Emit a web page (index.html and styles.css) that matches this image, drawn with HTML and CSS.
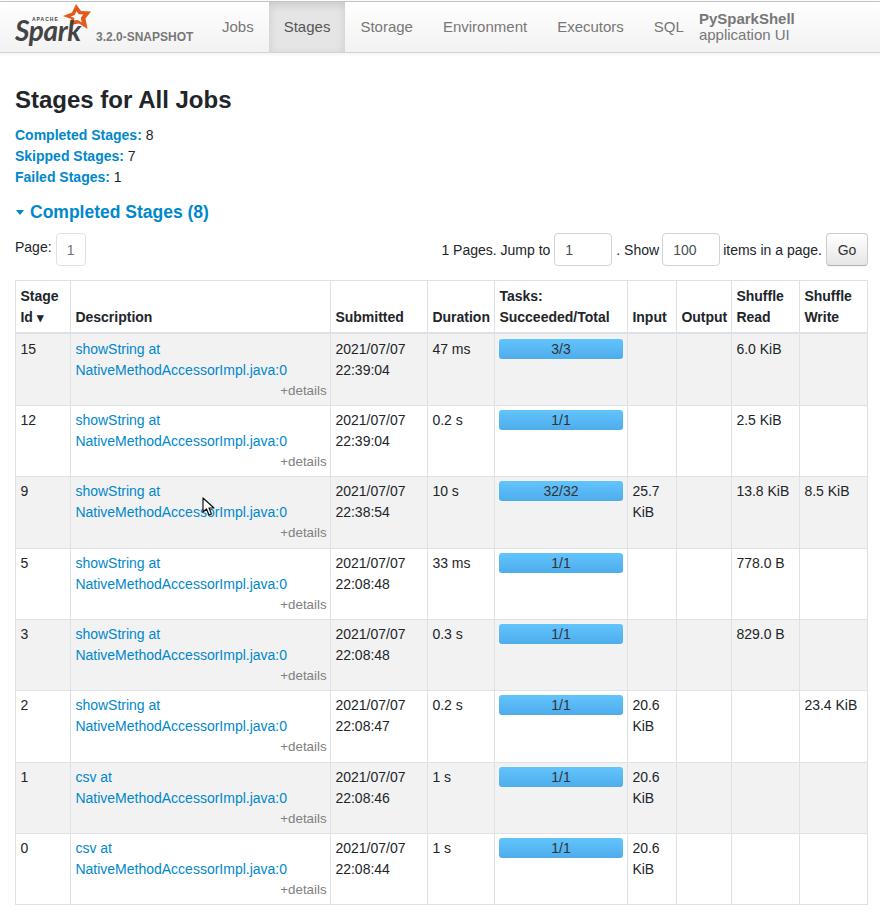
FILE: index.html
```html
<!DOCTYPE html>
<html lang="en">
<head>
<meta charset="utf-8">
<title>PySparkShell - Stages for All Jobs</title>
<link rel="stylesheet" href="styles.css">
</head>
<body>
<nav class="navbar">
  <a class="brand" href="#">
    <span class="logo">
      <svg class="star" viewBox="0 0 30 28" width="30" height="28"><path d="M14 1 L19 8 L29 8.5 L23.5 15.5 L25.5 26 L17 20.5 L8 22 L9.5 16 L1 13 L10 9.5 Z M14.55 8.15 L12.75 12 L8.7 13.5 L12.5 15 L11.9 17.6 L15.9 17 L19.7 19.4 L18.8 14.7 L21.3 11.5 L16.8 11.3 Z" fill="#e25a1c" fill-rule="evenodd"/></svg>
      <span class="spark">Spark</span>
      <span class="apache">APACHE</span>
    </span>
    <span class="version">3.2.0-SNAPSHOT</span>
  </a>
  <ul class="tabs">
    <li class="tab">Jobs</li>
    <li class="tab active">Stages</li>
    <li class="tab">Storage</li>
    <li class="tab">Environment</li>
    <li class="tab">Executors</li>
    <li class="tab">SQL</li>
  </ul>
  <p class="appname"><strong>PySparkShell</strong><br>application UI</p>
</nav>
<main class="page">
  <h3 class="title">Stages for All Jobs</h3>
  <ul class="summary">
    <li><a href="#"><strong>Completed Stages:</strong></a> 8</li>
    <li><a href="#"><strong>Skipped Stages:</strong></a> 7</li>
    <li><a href="#"><strong>Failed Stages:</strong></a> 1</li>
  </ul>
  <h4 class="section"><span class="caret"></span><a href="#">Completed Stages (8)</a></h4>
  <div class="pager">
    <div class="pager-left"><span class="page-label">Page:</span><span class="page-box">1</span></div>
    <form class="pager-right">
      <span class="pager-text">1 Pages. Jump to</span><input class="num jump" value="1"><span class="pager-text">. Show</span><input class="num show" value="100"><span class="pager-text">items in a page.</span><button class="go" type="button">Go</button>
    </form>
  </div>
  <table class="stages">
    <colgroup>
      <col class="c1"><col class="c2"><col class="c3"><col class="c4"><col class="c5"><col class="c6"><col class="c7"><col class="c8"><col class="c9">
    </colgroup>
    <thead>
      <tr><th>Stage Id <span class="sort">▾</span></th><th>Description</th><th>Submitted</th><th>Duration</th><th>Tasks: Succeeded/Total</th><th>Input</th><th>Output</th><th>Shuffle Read</th><th>Shuffle Write</th></tr>
    </thead>
    <tbody>
      <tr><td>15</td><td><a href="#">showString at<br>NativeMethodAccessorImpl.java:0</a><span class="details">+details</span></td><td>2021/07/07 22:39:04</td><td>47 ms</td><td><div class="bar">3/3</div></td><td></td><td></td><td>6.0 KiB</td><td></td></tr>
      <tr><td>12</td><td><a href="#">showString at<br>NativeMethodAccessorImpl.java:0</a><span class="details">+details</span></td><td>2021/07/07 22:39:04</td><td>0.2 s</td><td><div class="bar">1/1</div></td><td></td><td></td><td>2.5 KiB</td><td></td></tr>
      <tr><td>9</td><td><a href="#">showString at<br>NativeMethodAccessorImpl.java:0</a><span class="details">+details</span></td><td>2021/07/07 22:38:54</td><td>10 s</td><td><div class="bar">32/32</div></td><td>25.7 KiB</td><td></td><td>13.8 KiB</td><td>8.5 KiB</td></tr>
      <tr><td>5</td><td><a href="#">showString at<br>NativeMethodAccessorImpl.java:0</a><span class="details">+details</span></td><td>2021/07/07 22:08:48</td><td>33 ms</td><td><div class="bar">1/1</div></td><td></td><td></td><td>778.0 B</td><td></td></tr>
      <tr><td>3</td><td><a href="#">showString at<br>NativeMethodAccessorImpl.java:0</a><span class="details">+details</span></td><td>2021/07/07 22:08:48</td><td>0.3 s</td><td><div class="bar">1/1</div></td><td></td><td></td><td>829.0 B</td><td></td></tr>
      <tr><td>2</td><td><a href="#">showString at<br>NativeMethodAccessorImpl.java:0</a><span class="details">+details</span></td><td>2021/07/07 22:08:47</td><td>0.2 s</td><td><div class="bar">1/1</div></td><td>20.6 KiB</td><td></td><td></td><td>23.4 KiB</td></tr>
      <tr><td>1</td><td><a href="#">csv at<br>NativeMethodAccessorImpl.java:0</a><span class="details">+details</span></td><td>2021/07/07 22:08:46</td><td>1 s</td><td><div class="bar">1/1</div></td><td>20.6 KiB</td><td></td><td></td><td></td></tr>
      <tr><td>0</td><td><a href="#">csv at<br>NativeMethodAccessorImpl.java:0</a><span class="details">+details</span></td><td>2021/07/07 22:08:44</td><td>1 s</td><td><div class="bar">1/1</div></td><td>20.6 KiB</td><td></td><td></td><td></td></tr>
    </tbody>
  </table>
</main>
<svg class="cursor" viewBox="0 0 14 20" width="14" height="20"><path d="M1 1 L1 15 L4.5 12 L7 18 L9.5 17 L7 11 L12 11 Z" fill="#fff" stroke="#111" stroke-width="1.2" stroke-linejoin="round"/></svg>
</body>
</html>
```
FILE: styles.css
```css
* { box-sizing: border-box; }
html, body { margin: 0; padding: 0; }
body {
  position: relative;
  padding-top: 1px;
  background: #fff;
  color: #212529;
  font: 14px/21px "Liberation Sans", Arial, sans-serif;
  overflow: hidden;
}
a { color: #0088cc; text-decoration: none; }

.navbar {
  display: flex;
  height: 52px;
  border-top: 1px solid #c4c4c4;
  border-bottom: 1px solid #d4d4d4;
  background: linear-gradient(#ffffff, #f2f2f2);
  box-shadow: 0 1px 4px rgba(0,0,0,.065);
}
.brand { display: flex; width: 207px; padding-left: 15px; }
.logo { position: relative; display: block; width: 81px; height: 49px; }
.star { position: absolute; left: 47px; top: 1px; }
.apache {
  position: absolute; left: 17px; top: 15px;
  font: bold 5px/5px "Liberation Sans", sans-serif;
  letter-spacing: 1px; color: #444;
}
.spark {
  position: absolute; left: 0; top: 18px;
  font: italic bold 28px/20px Lato, sans-serif;
  letter-spacing: -.4px; color: #444;
}
.version {
  margin-top: 27px;
  font: bold 12px/16px "Liberation Sans", sans-serif;
  color: #777;
}
.tabs { display: flex; margin: 0; padding: 0; list-style: none; }
.tab {
  padding: 14px 15px 0;
  font-size: 15px; line-height: 22px;
  color: #777;
}
.tab.active {
  color: #555;
  background: #e5e5e5;
  box-shadow: inset 0 3px 8px rgba(0,0,0,.125);
}
.appname {
  margin: 9px 0 0 0;
  padding-left: 0;
  font-size: 15px; line-height: 16px;
  color: #777;
}

.page { padding: 0 12px 0 15px; }
.title { margin: 32px 0 11px; font-size: 24px; line-height: 29px; font-weight: bold; color: #212529; }
.summary { margin: 0; padding: 0; list-style: none; }
.section { display: flex; align-items: center; margin: 13px 0 0; font-size: 17.5px; line-height: 22px; font-weight: bold; }
.caret {
  width: 0; height: 0; margin: 1px 6px 0 1px;
  border: 4.5px solid transparent; border-top: 5px solid #0088cc; border-bottom: 0;
}
.pager { display: flex; justify-content: space-between; margin-top: 10px; height: 37px; }
.pager-left { display: flex; align-items: flex-start; }
.page-label { margin-top: 4px; }
.page-box {
  width: 30px; height: 33px; margin-left: 4px;
  border: 1px solid #dee2e6; border-radius: 4px;
  text-align: center; line-height: 33px; color: #6c757d; background: #fff;
}
.pager-right { display: flex; align-items: center; height: 33px; margin: 0; }
.pager-text { margin-top: 2px; }
.num {
  height: 33px; margin: 0 4px;
  padding: 0 10px;
  border: 1px solid #ced4da; border-radius: 4px;
  font: 14px "Liberation Sans", sans-serif; color: #495057;
}
.jump { width: 58px; }
.show { width: 58px; margin: 0 3px; }
.go {
  width: 42px; height: 33px; margin-left: 4px; padding: 0;
  border: 1px solid #ccc; border-bottom-color: #b3b3b3; border-radius: 4px;
  background: linear-gradient(#fff, #e6e6e6);
  font: 14px "Liberation Sans", sans-serif; color: #333;
  box-shadow: 0 1px 2px rgba(0,0,0,.05);
}

.stages { width: 852px; margin-top: 10px; table-layout: fixed; border-collapse: collapse; border: 1px solid #dee2e6; }
.c1 { width: 55px; } .c2 { width: 260px; } .c3 { width: 97px; } .c4 { width: 67px; }
.c5 { width: 133px; } .c6 { width: 49px; } .c7 { width: 55px; } .c8 { width: 68px; } .c9 { width: 68px; }
.stages th, .stages td {
  padding: 4.2px 4.4px;
  border: 1px solid #dee2e6;
  vertical-align: top;
  text-align: left;
}
.stages th { padding-top: 5.2px; vertical-align: bottom; border-bottom-width: 2px; font-weight: bold; }
.stages tbody tr:nth-child(odd) { background: #f2f2f2; }
.sort { font-size: 13px; }
.details { display: block; text-align: right; margin-right: -1px; font-size: 13.33px; line-height: 20px; color: #808080; white-space: nowrap; }
.bar {
  height: 20px; line-height: 20px;
  border-radius: 3px;
  background: linear-gradient(#62c4fd, #4eaceb);
  text-align: center; color: #333;
}
.cursor { position: absolute; left: 202px; top: 497px; }
```
